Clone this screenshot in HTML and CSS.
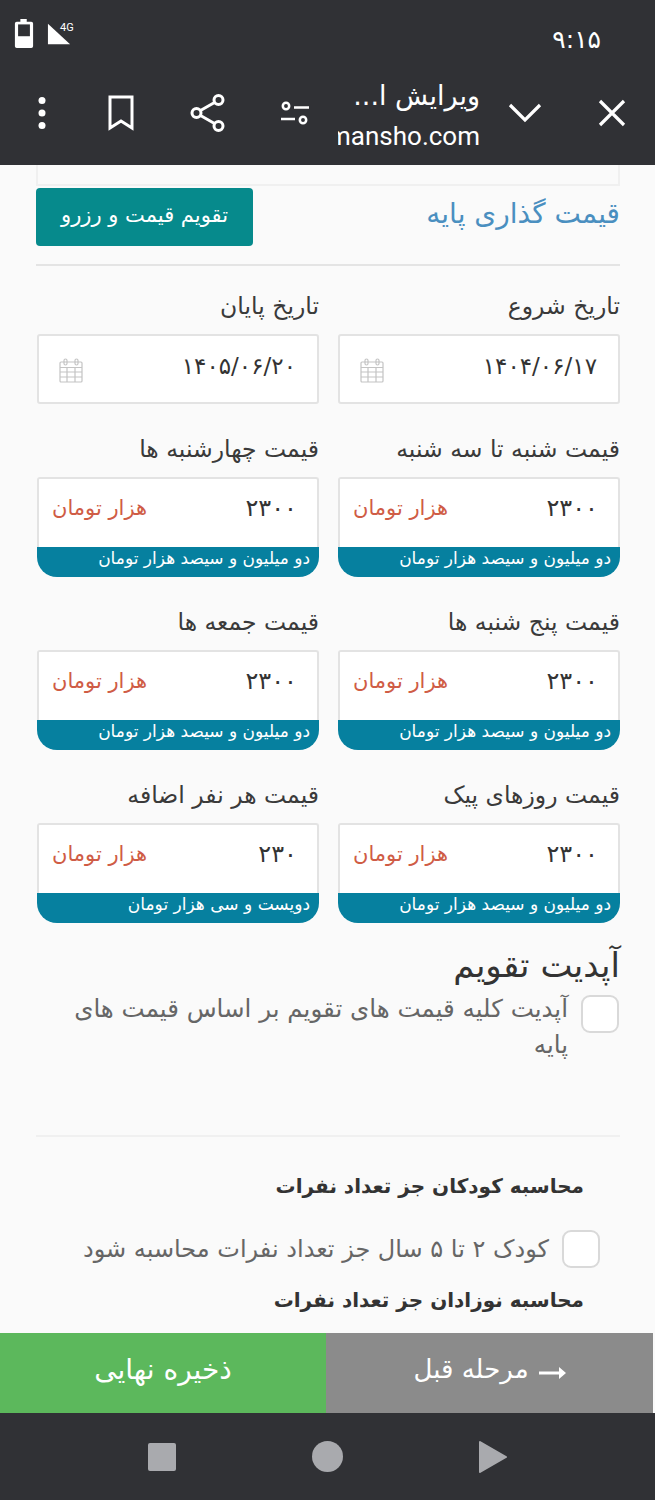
FILE: index.html
```html
<!DOCTYPE html>
<html lang="fa">
<head>
<meta charset="utf-8">
<title>ویرایش</title>
<link rel="stylesheet" href="styles.css">
</head>
<body>
<div class="phone">
  <header class="chrome">
    <div class="status">
      <div class="status-icons">
        <svg class="battery" width="20" height="31" viewBox="0 0 22 34"><path fill="#fff" d="M7 1h7v3h5a2 2 0 0 1 2 2v25a2 2 0 0 1-2 2H3a2 2 0 0 1-2-2V6a2 2 0 0 1 2-2h4z"/><rect x="4.500" y="7" width="13" height="13" fill="#303135"/></svg>
        <svg class="signal" width="24" height="24" viewBox="0 0 26 24"><path fill="#fff" d="M1 1l24 22H1z"/></svg>
        <span class="net">4G</span>
      </div>
      <span class="clock">۹:۱۵</span>
    </div>
    <div class="toolbar" dir="ltr">
      <svg class="tb-icon i-more" width="12" height="32" viewBox="0 0 12 32"><circle cx="6" cy="3.500" r="3.500" fill="#fff"/><circle cx="6" cy="16" r="3.500" fill="#fff"/><circle cx="6" cy="28.500" r="3.500" fill="#fff"/></svg>
      <svg class="tb-icon i-bookmark" width="28" height="36" viewBox="0 0 28 36"><path fill="none" stroke="#fff" stroke-width="3" d="M3 2h22v31L14 26 3 33z"/></svg>
      <svg class="tb-icon i-share" width="36" height="38" viewBox="0 0 36 38"><g fill="none" stroke="#fff" stroke-width="3"><circle cx="6.500" cy="19" r="4.500"/><circle cx="28.500" cy="6" r="4.500"/><circle cx="28.500" cy="32" r="4.500"/><path d="M10.500 16.500l14-8M10.500 21.500l14 8"/></g></svg>
      <svg class="tb-icon i-tune" width="28" height="24" viewBox="0 0 28 24"><g fill="none" stroke="#fff" stroke-width="2.500"><circle cx="5" cy="5" r="3.200"/><circle cx="22" cy="19" r="3.200"/><path d="M13 6.500h15M0 18h14"/></g></svg>
      <div class="tb-title">
        <div class="tb-name" dir="rtl">ویرایش ا...</div>
        <div class="tb-url">mansho.com</div>
      </div>
      <svg class="tb-icon i-chev" width="34" height="22" viewBox="0 0 34 22"><path fill="none" stroke="#fff" stroke-width="3.200" d="M2 3l15 15L32 3"/></svg>
      <svg class="tb-icon i-close" width="28" height="28" viewBox="0 0 28 28"><path fill="none" stroke="#fff" stroke-width="3.200" d="M2 2l24 24M26 2L2 26"/></svg>
    </div>
  </header>

  <main class="content" dir="rtl">
    <div class="prev-panel"></div>
    <div class="title-row">
      <h2 class="section-title">قیمت گذاری پایه</h2>
      <a class="calendar-btn">تقویم قیمت و رزرو</a>
    </div>
    <hr class="rule">
    <div class="fields">
      <div class="field">
        <label class="label">تاریخ شروع</label>
        <div class="date-input"><span>۱۴۰۴/۰۶/۱۷</span>
          <svg class="cal" width="24" height="25" viewBox="0 0 24 25"><g fill="none" stroke="#c4c4c4" stroke-width="1.200"><rect x="1" y="4" width="22" height="20" rx="1"/><path d="M1 9.500h22M1 14h22M1 19h22M8 9.500V24M16 9.500V24"/><rect x="5" y="1" width="3" height="6" rx="1.500"/><rect x="16" y="1" width="3" height="6" rx="1.500"/></g></svg>
        </div>
      </div>
      <div class="field">
        <label class="label">تاریخ پایان</label>
        <div class="date-input"><span>۱۴۰۵/۰۶/۲۰</span>
          <svg class="cal" width="24" height="25" viewBox="0 0 24 25"><g fill="none" stroke="#c4c4c4" stroke-width="1.200"><rect x="1" y="4" width="22" height="20" rx="1"/><path d="M1 9.500h22M1 14h22M1 19h22M8 9.500V24M16 9.500V24"/><rect x="5" y="1" width="3" height="6" rx="1.500"/><rect x="16" y="1" width="3" height="6" rx="1.500"/></g></svg>
        </div>
      </div>
      <div class="field">
        <label class="label">قیمت شنبه تا سه شنبه</label>
        <div class="price"><div class="price-row"><span class="num">۲۳۰۰</span><span class="unit">هزار تومان</span></div><div class="words">دو میلیون و سیصد هزار تومان</div></div>
      </div>
      <div class="field">
        <label class="label">قیمت چهارشنبه ها</label>
        <div class="price"><div class="price-row"><span class="num">۲۳۰۰</span><span class="unit">هزار تومان</span></div><div class="words">دو میلیون و سیصد هزار تومان</div></div>
      </div>
      <div class="field">
        <label class="label">قیمت پنج شنبه ها</label>
        <div class="price"><div class="price-row"><span class="num">۲۳۰۰</span><span class="unit">هزار تومان</span></div><div class="words">دو میلیون و سیصد هزار تومان</div></div>
      </div>
      <div class="field">
        <label class="label">قیمت جمعه ها</label>
        <div class="price"><div class="price-row"><span class="num">۲۳۰۰</span><span class="unit">هزار تومان</span></div><div class="words">دو میلیون و سیصد هزار تومان</div></div>
      </div>
      <div class="field">
        <label class="label">قیمت روزهای پیک</label>
        <div class="price"><div class="price-row"><span class="num">۲۳۰۰</span><span class="unit">هزار تومان</span></div><div class="words">دو میلیون و سیصد هزار تومان</div></div>
      </div>
      <div class="field">
        <label class="label">قیمت هر نفر اضافه</label>
        <div class="price"><div class="price-row"><span class="num">۲۳۰</span><span class="unit">هزار تومان</span></div><div class="words">دویست و سی هزار تومان</div></div>
      </div>
    </div>
    <h3 class="update-title">آپدیت تقویم</h3>
    <div class="check-row check-row-update">
      <span class="box"></span>
      <span class="check-text">آپدیت کلیه قیمت های تقویم بر اساس قیمت های پایه</span>
    </div>
    <hr class="rule rule-light">
    <div class="calc">
      <h4 class="calc-title">محاسبه کودکان جز تعداد نفرات</h4>
      <div class="check-row check-row-calc">
        <span class="box"></span>
        <span class="check-text">کودک ۲ تا ۵ سال جز تعداد نفرات محاسبه شود</span>
      </div>
      <h4 class="calc-title">محاسبه نوزادان جز تعداد نفرات</h4>
    </div>
  </main>

  <div class="actions" dir="rtl">
    <div class="act act-prev">
      <svg class="arrow" width="27" height="12" viewBox="0 0 27 12"><path fill="#fff" d="M0 4.500h20V0l7 6-7 6V7.500H0z"/></svg>
      <span>مرحله قبل</span>
    </div>
    <div class="act act-save"><span>ذخیره نهایی</span></div>
  </div>

  <nav class="sysnav">
    <svg width="28" height="28" viewBox="0 0 28 28"><rect x="0" y="0" width="28" height="28" rx="2" fill="#a9aaae"/></svg>
    <svg width="31" height="31" viewBox="0 0 31 31"><circle cx="15.500" cy="15.500" r="15.500" fill="#a9aaae"/></svg>
    <svg width="28" height="32" viewBox="0 0 28 32"><path fill="#a9aaae" stroke="#a9aaae" stroke-width="2" stroke-linejoin="round" d="M1 1l26 15L1 31z"/></svg>
  </nav>
</div>
</body>
</html>
```

FILE: styles.css
```css
* { box-sizing: border-box; }
html, body { margin: 0; padding: 0; }
body { font-family: "DejaVu Sans", "Noto Sans", sans-serif; background: #fafafa; }
.phone { width: 655px; height: 1500px; display: flex; flex-direction: column; overflow: hidden; }

.chrome { height: 165px; background: #303135; color: #fff; flex: none; }
.status { height: 72px; display: flex; justify-content: space-between; padding: 18px 54px 0 14px; }
.status-icons { display: flex; align-items: flex-start; position: relative; }
.signal { margin: 4px 0 0 13px; }
.net { position: absolute; left: 46px; top: 3px; font: 11px "Roboto", sans-serif; }
.clock { font-size: 25px; line-height: 1; margin-top: 9px; }

.toolbar { height: 93px; display: flex; align-items: center; padding: 0 29px 0 36px; }
.tb-icon { flex: none; margin-top: -11px; }
.i-more { margin-right: 59px; }
.i-bookmark { margin-right: 55px; }
.i-share { margin-right: 55px; }
.i-tune { margin-right: 29px; }
.tb-title { width: 142px; margin-right: 28px; margin-top: -5px; overflow: hidden; white-space: nowrap; }
.tb-name { font-size: 27px; line-height: 34px; }
.tb-url { font: 26px/34px "Roboto", sans-serif; direction: rtl; margin-top: 6px; }
.i-chev { margin-right: 56px; }

.content { flex: 1; min-height: 0; overflow: hidden; padding: 0 35px 0 36px; color: #333; }
.prev-panel { height: 21px; border: 2px solid #f0f0f0; border-top: 0; }
.title-row { display: flex; justify-content: space-between; align-items: center; margin-top: 2px; }
.section-title { margin: 0 0 6px; font-size: 28px; line-height: 40px; font-weight: 400; color: #4a8fc0; }
.calendar-btn { width: 217px; height: 58px; padding-bottom: 4px; background: #068a8c; color: #fff; border-radius: 4px; display: flex; align-items: center; justify-content: center; font-size: 21px; }
.rule { border: 0; height: 2px; background: #e4e4e4; margin: 18px 0 0; }
.rule-light { background: #f0f0f0; margin-top: 72px; }

.fields { display: grid; grid-template-columns: 282px 282px; column-gap: 19px; justify-content: start; margin-top: 21px; }
.field { display: flex; flex-direction: column; }
.label { font-size: 23.500px; line-height: 38px; height: 47px; color: #3a3a3a; }
.date-input { height: 70px; background: #fff; border: 2px solid #e3e3e3; border-radius: 3px; display: flex; align-items: center; justify-content: space-between; padding: 0 21px 7px 20px; font-size: 23px; margin-bottom: 26px; }
.cal { margin-top: 10px; }
.price { height: 100px; margin-bottom: 26px; border-radius: 3px 3px 20px 20px; background: #fff; display: flex; flex-direction: column; }
.price-row { flex: 1; display: flex; justify-content: space-between; align-items: center; padding: 0 20px 10px 13px; border: 2px solid #e3e3e3; border-bottom: 0; border-radius: 3px 3px 0 0; }
.num { font-size: 24px; }
.unit { font-size: 21px; color: #cf5c45; }
.words { height: 30px; background: #06809f; color: #fff; border-radius: 0 0 20px 20px; font-size: 17px; line-height: 22px; padding: 0 9px; }

.update-title { margin: -4px 0 0; font-size: 34px; line-height: 40px; font-weight: 400; color: #333; }
.check-row { display: flex; align-items: flex-start; gap: 13px; margin-top: 6px; }
.check-row-update { margin-right: 1px; padding-left: 34px; }
.check-row-update .box { margin-top: 4px; }
.check-row-update .check-text { font-size: 24.500px; }
.box { flex: none; width: 38px; height: 38px; background: #fff; border: 2px solid #d9d9d9; border-radius: 9px; }
.check-text { font-size: 24px; line-height: 36px; color: #666; }
.calc { padding-right: 36px; margin-top: 29px; }
.calc-title { margin: 0; font-size: 20px; font-weight: 700; line-height: 40px; color: #333; }
.check-row-calc { margin: 24px -16px 12px 0; align-items: center; }

.actions { height: 80px; flex: none; display: flex; background: #fafafa; }
.act { width: 327px; color: #fff; font-size: 26px; display: flex; align-items: center; justify-content: center; gap: 10px; padding-bottom: 8px; }
.act-prev { background: #8b8b8b; margin-right: 2px; }
.act-save { background: #5cb85c; width: 326px; font-size: 28px; }
.arrow { margin-top: 8px; }

.sysnav { height: 87px; flex: none; background: #303135; display: flex; justify-content: center; align-items: center; gap: 136px; direction: ltr; }
```
